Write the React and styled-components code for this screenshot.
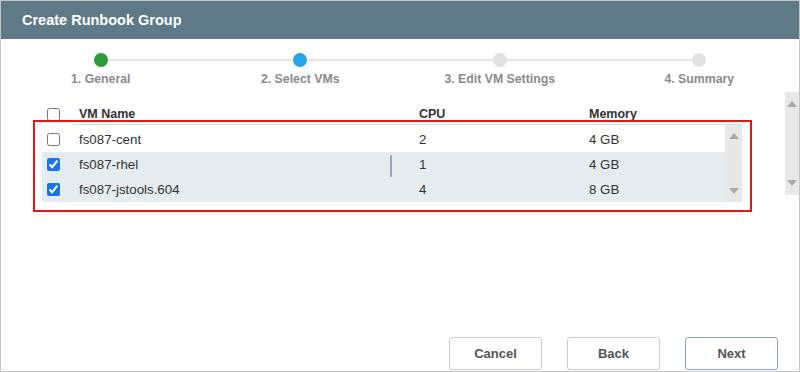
import React from "react";
import styled, { createGlobalStyle } from "styled-components";

const GlobalStyle = createGlobalStyle`
  html, body {
    margin: 0;
    padding: 0;
    background: #fff;
  }
  * {
    box-sizing: border-box;
  }
`;

const Frame = styled.div`
  position: relative;
  width: 800px;
  height: 372px;
  border: 1px solid #c6c6c6;
  display: flex;
  flex-direction: column;
  font-family: "Liberation Sans", Arial, sans-serif;
  color: #333;
  background: #fff;
  overflow: hidden;
`;

const Header = styled.div`
  height: 38px;
  background: #5e7a87;
  display: flex;
  align-items: center;
  padding-left: 21px;
  color: #fff;
  font-size: 14.5px;
  font-weight: bold;
  flex-shrink: 0;
`;

const Stepper = styled.div`
  display: grid;
  grid-template-columns: repeat(4, 1fr);
  padding-top: 14px;
`;

const Step = styled.div`
  display: flex;
  flex-direction: column;
  align-items: center;
`;

const DotRow = styled.div`
  width: 100%;
  display: flex;
  align-items: center;
  &::before,
  &::after {
    content: "";
    flex: 1;
    height: 2px;
    background: #e6e6e6;
  }
  &::before {
    visibility: ${(p) => (p.$first ? "hidden" : "visible")};
  }
  &::after {
    visibility: ${(p) => (p.$last ? "hidden" : "visible")};
  }
`;

const Dot = styled.span`
  width: 14px;
  height: 14px;
  border-radius: 50%;
  background: ${(p) => p.$color};
  flex-shrink: 0;
`;

const StepLabel = styled.div`
  margin-top: 5px;
  font-size: 12.3px;
  line-height: 14px;
  font-weight: bold;
  color: #8a8a8a;
`;

const Main = styled.div`
  display: flex;
  margin-top: 6px;
`;

const Content = styled.div`
  flex: 1;
  padding-top: 11px;
  padding-left: 41px;
`;

const Table = styled.div`
  width: 700px;
`;

const HeadRow = styled.div`
  display: flex;
  height: 22px;
`;

const CheckCell = styled.div`
  width: 32px;
  display: flex;
  align-items: center;
  padding-left: 5px;
  flex-shrink: 0;
`;

const HeadCols = styled.div`
  flex: 1;
  display: grid;
  grid-template-columns: 340px 170px 1fr;
  align-items: center;
  padding-left: 5px;
  border-bottom: 1px solid #e2e2e2;
  font-size: 12.5px;
  font-weight: bold;
  color: #333;
`;

const Body = styled.div`
  display: flex;
  height: 77px;
`;

const Rows = styled.div`
  flex: 1;
  padding-top: 2px;
`;

const Row = styled.div`
  position: relative;
  display: flex;
  height: 25px;
  background: ${(p) => (p.$selected ? "#e4ecef" : "#fff")};
`;

const Cols = styled.div`
  flex: 1;
  display: grid;
  grid-template-columns: 340px 170px 1fr;
  align-items: center;
  padding-left: 5px;
  font-size: 13.3px;
  color: #333;
`;

const Box = styled.input`
  margin: 0;
  width: 13px;
  height: 13px;
  accent-color: #1a73e8;
`;

const Caret = styled.span`
  position: absolute;
  left: 348px;
  top: 3px;
  width: 2px;
  height: 22px;
  background: #9aaabb;
`;

const Scrollbar = styled.div`
  width: ${(p) => p.$w}px;
  height: ${(p) => p.$h}px;
  background: #e8e8e8;
  display: flex;
  flex-direction: column;
  justify-content: space-between;
  align-items: center;
  padding: ${(p) => p.$pad}px 0;
  flex-shrink: 0;
`;

const Footer = styled.div`
  margin-top: auto;
  display: flex;
  justify-content: flex-end;
  gap: 25px;
  padding-right: 21px;
  padding-bottom: 1px;
`;

const Button = styled.button`
  width: 93px;
  height: 33px;
  background: #fff;
  border: 1px solid ${(p) => (p.$primary ? "#8aa3c2" : "#cccccc")};
  border-radius: 3px;
  font-family: "Liberation Sans", Arial, sans-serif;
  font-size: 13px;
  font-weight: bold;
  color: #555;
`;

const Highlight = styled.div`
  position: absolute;
  left: 32px;
  top: 119px;
  width: 719px;
  height: 92px;
  border: 2px solid #e8141b;
  pointer-events: none;
`;

const Arrow = ({ down }) => (
  <svg width="10" height="6" viewBox="0 0 10 6">
    <path d={down ? "M0 0 L10 0 L5 6 Z" : "M0 6 L10 6 L5 0 Z"} fill="#a9a9a9" />
  </svg>
);

const steps = [
  { label: "1. General", color: "#2e9a3a" },
  { label: "2. Select VMs", color: "#27a5e6" },
  { label: "3. Edit VM Settings", color: "#e2e2e2" },
  { label: "4. Summary", color: "#e2e2e2" },
];

const vms = [
  { name: "fs087-cent", cpu: "2", mem: "4 GB", checked: false },
  { name: "fs087-rhel", cpu: "1", mem: "4 GB", checked: true, caret: true },
  { name: "fs087-jstools.604", cpu: "4", mem: "8 GB", checked: true },
];

export default function App() {
  return (
    <>
      <GlobalStyle />
      <Frame>
        <Header>Create Runbook Group</Header>
        <Stepper>
          {steps.map((s, i) => (
            <Step key={s.label}>
              <DotRow $first={i === 0} $last={i === steps.length - 1}>
                <Dot $color={s.color} />
              </DotRow>
              <StepLabel>{s.label}</StepLabel>
            </Step>
          ))}
        </Stepper>
        <Main>
          <Content>
            <Table>
              <HeadRow>
                <CheckCell>
                  <Box type="checkbox" readOnly />
                </CheckCell>
                <HeadCols>
                  <span>VM Name</span>
                  <span>CPU</span>
                  <span>Memory</span>
                </HeadCols>
              </HeadRow>
              <Body>
                <Rows>
                  {vms.map((vm) => (
                    <Row key={vm.name} $selected={vm.checked}>
                      <CheckCell>
                        <Box type="checkbox" checked={vm.checked} readOnly />
                      </CheckCell>
                      <Cols>
                        <span>{vm.name}</span>
                        <span>{vm.cpu}</span>
                        <span>{vm.mem}</span>
                      </Cols>
                      {vm.caret && <Caret />}
                    </Row>
                  ))}
                </Rows>
                <Scrollbar $w={17} $h={77} $pad={8}>
                  <Arrow />
                  <Arrow down />
                </Scrollbar>
              </Body>
            </Table>
          </Content>
          <Scrollbar $w={14} $h={103} $pad={9}>
            <Arrow />
            <Arrow down />
          </Scrollbar>
        </Main>
        <Footer>
          <Button>Cancel</Button>
          <Button>Back</Button>
          <Button $primary>Next</Button>
        </Footer>
        <Highlight />
      </Frame>
    </>
  );
}
